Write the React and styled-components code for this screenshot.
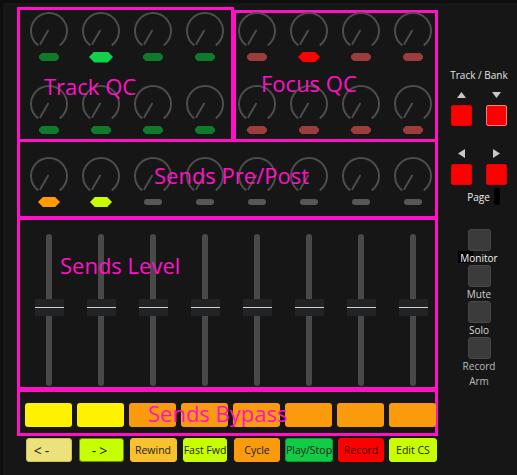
import React from 'react'
import styled, { createGlobalStyle } from 'styled-components'

const PINK = '#ff12c6'

const GlobalStyle = createGlobalStyle`
  html, body {
    margin: 0;
    padding: 0;
    background: #161616;
  }
  * { box-sizing: border-box; }
  body {
    font-family: 'Open Sans', 'Noto Sans', sans-serif;
  }
`

const Screen = styled.div`
  width: 517px;
  height: 475px;
  display: flex;
  background: #161616;
  box-shadow: inset 3px 3px 0 #0e0e0e;
  overflow: hidden;
`

const MainColumn = styled.div`
  flex: none;
  width: 421px;
  margin-left: 17px;
  padding-top: 7px;
  display: flex;
  flex-direction: column;
`

const TopRow = styled.div`
  display: flex;
  align-items: flex-end;
  height: 135px;
`

// pink annotation frame round a group of controls
const Zone = styled.section`
  position: relative;
  flex: none;
  width: ${(p) => p.$w}px;
  height: ${(p) => p.$h}px;
  margin-top: ${(p) => p.$mt || 0}px;
  margin-left: ${(p) => p.$ml || 0}px;
  border: 3px solid ${PINK};
`

const ZoneLabel = styled.span`
  position: absolute;
  top: ${(p) => p.$top}px;
  left: ${(p) => p.$left}px;
  z-index: 2;
  font-size: 22px;
  line-height: 22px;
  color: ${PINK};
  white-space: nowrap;
  pointer-events: none;
`

const KnobGrid = styled.div`
  display: grid;
  grid-template-columns: repeat(${(p) => p.$cols}, 42px);
  column-gap: 10px;
  row-gap: 21px;
  padding: ${(p) => p.$pt || 0}px 0 0 ${(p) => p.$pl || 0}px;
  margin-top: ${(p) => p.$mt || 0}px;
`

const KnobCell = styled.div`
  display: flex;
  flex-direction: column;
  align-items: center;
`

const KnobDial = styled.svg`
  display: block;
  width: 40px;
  height: 40px;
  fill: none;
  stroke: #4d4d4d;
  stroke-width: 2;
`

const LightSlot = styled.div`
  width: 100%;
  height: 12px;
  display: flex;
  align-items: center;
  justify-content: center;
`

const SHAPES = {
  hex: 'polygon(22% 0, 78% 0, 100% 50%, 78% 100%, 22% 100%, 0 50%)',
  oct: 'polygon(14% 0, 86% 0, 100% 35%, 100% 65%, 86% 100%, 14% 100%, 0 65%, 0 35%)',
  pill: 'none'
}

const LIGHTS = {
  green: { w: 20, h: 8, bg: '#107a2c', shape: 'oct' },
  greenOn: { w: 24, h: 11, bg: '#12d24a', shape: 'hex' },
  red: { w: 20, h: 8, bg: '#9b3d3d', shape: 'oct' },
  redOn: { w: 22, h: 10, bg: '#ff0000', shape: 'hex' },
  orange: { w: 22, h: 10, bg: '#ff9a00', shape: 'hex' },
  lime: { w: 22, h: 10, bg: '#c8ff00', shape: 'hex' },
  grey: { w: 18, h: 6, bg: '#575757', shape: 'pill' }
}

const Light = styled.span`
  display: block;
  width: ${(p) => LIGHTS[p.$kind].w}px;
  height: ${(p) => LIGHTS[p.$kind].h}px;
  background: ${(p) => LIGHTS[p.$kind].bg};
  clip-path: ${(p) => SHAPES[LIGHTS[p.$kind].shape]};
  border-radius: ${(p) => (LIGHTS[p.$kind].shape === 'pill' ? '3px' : '0')};
`

const FaderGrid = styled.div`
  display: grid;
  grid-template-columns: repeat(8, 42px);
  column-gap: 10px;
  padding: 14px 0 0 8px;
`

const FaderCell = styled.div`
  position: relative;
  height: 152px;
  display: flex;
  justify-content: center;
`

const FaderTrack = styled.div`
  width: 6px;
  height: 100%;
  border-radius: 3px;
  background: #494949;
`

const FaderCap = styled.div`
  position: absolute;
  top: 65px;
  left: 50%;
  width: 29px;
  height: 17px;
  margin-left: -14.5px;
  background: #222325;
  &::after {
    content: '';
    position: absolute;
    left: 0;
    right: 0;
    top: 8px;
    height: 1px;
    background: #cfcfcf;
  }
`

const BypassRow = styled.div`
  display: flex;
  gap: 5px;
  padding: 11px 0 0 5px;
`

const PadButton = styled.div`
  flex: none;
  width: 47px;
  height: 24px;
  border-radius: 3px;
  background: ${(p) => p.$color};
`

const TransportRow = styled.div`
  display: grid;
  grid-template-columns: repeat(8, 52px);
  justify-items: center;
  height: 24px;
  margin-top: 2px;
  padding-left: 6px;
`

const TransportButton = styled.div`
  width: ${(p) => p.$w}px;
  height: 24px;
  display: flex;
  align-items: center;
  justify-content: center;
  padding-right: ${(p) => p.$pr || 0}px;
  border: 1px solid ${(p) => p.$edge || p.$bg};
  border-radius: 3px;
  background: ${(p) => p.$bg};
  color: ${(p) => p.$color || '#1c1c1c'};
  font-size: ${(p) => (p.$big ? '14px' : '10.5px')};
  letter-spacing: ${(p) => (p.$big ? '3px' : '0')};
  white-space: nowrap;
`

const SidePanel = styled.aside`
  flex: none;
  width: 79px;
  padding: 69px 0 0 3px;
  display: flex;
  flex-direction: column;
  align-items: center;
  font-size: 10px;
  line-height: 12px;
  color: #e4e4e4;
`

const SideTitle = styled.div`
  white-space: nowrap;
`

const PairRow = styled.div`
  display: flex;
  gap: 14px;
  margin-top: ${(p) => p.$mt}px;
`

const ArrowCell = styled.div`
  width: 21px;
  height: ${(p) => p.$h}px;
  display: flex;
  align-items: center;
  justify-content: center;
`

const Arrow = styled.svg`
  display: block;
  fill: #c8c8c8;
`

const RedPad = styled.div`
  width: 21px;
  height: 21px;
  border: 1px solid ${(p) => p.$edge || '#e60000'};
  border-radius: 2px;
  background: #ff0000;
`

const PageRow = styled.div`
  display: flex;
  align-items: center;
  gap: 4px;
  height: 17px;
  margin: 3px 0 0 9px;
  color: #eeeeee;
`

const PageSlot = styled.span`
  width: 6px;
  height: 17px;
  border-radius: 2px;
  background: #000;
`

const ToggleGroup = styled.div`
  display: flex;
  flex-direction: column;
  align-items: center;
  margin-top: ${(p) => p.$mt || 0}px;
`

const ToggleButton = styled.div`
  width: 23px;
  height: 22px;
  border: 1px solid #474747;
  border-radius: 3px;
  background: #3b3b3b;
`

const ToggleLabel = styled.div`
  position: relative;
  z-index: 0;
  line-height: ${(p) => p.$lh || 14}px;
  color: ${(p) => p.$color};
  text-align: center;
  white-space: nowrap;
  ${(p) => p.$shade && `
    &::before {
      content: '';
      position: absolute;
      z-index: -1;
      left: -2px;
      top: 0;
      width: 15px;
      height: 12px;
      background: #000;
    }
  `}
`

const trackLights = [
  ['green', 'greenOn', 'green', 'green'],
  ['green', 'green', 'green', 'green']
]
const focusLights = [
  ['red', 'redOn', 'red', 'red'],
  ['red', 'red', 'red', 'red']
]
const sendLights = ['orange', 'lime', 'grey', 'grey', 'grey', 'grey', 'grey', 'grey']
const bypassColors = ['#fff200', '#fff200', '#f99b0c', '#f99b0c', '#f99b0c', '#f99b0c', '#f99b0c', '#f99b0c']

const transport = [
  { label: '<-', w: 46, bg: '#ece27b', edge: '#cdc25c', big: true, pr: 12 },
  { label: '->', w: 45, bg: '#c6ff00', edge: '#6e8c00', big: true },
  { label: 'Rewind', w: 47, bg: '#f8c12d' },
  { label: 'Fast Fwd', w: 44, bg: '#c8ff00' },
  { label: 'Cycle', w: 46, bg: '#f99b0c' },
  { label: 'Play/Stop', w: 48, bg: '#12cc45', edge: '#0b9a33' },
  { label: 'Record', w: 46, bg: '#ff0000', color: '#4a0000' },
  { label: 'Edit CS', w: 48, bg: '#c8ff00' }
]

const toggles = [
  { label: 'Monitor', color: '#f4f4f4', shade: true },
  { label: 'Mute', color: '#cfcfcf' },
  { label: 'Solo', color: '#dadada' },
  { label: 'Record\nArm', color: '#bababa', lh: 15 }
]

const Knob = ({ light }) => (
  <KnobCell>
    <KnobDial viewBox='0 0 40 40'>
      <path d='M9.17 34.38A18 18 0 1 1 30.83 34.38' />
      <line x1='19' y1='19.7' x2='11.3' y2='33' strokeLinecap='round' />
    </KnobDial>
    <LightSlot><Light $kind={light} /></LightSlot>
  </KnobCell>
)

const App = () => (
  <Screen>
    <GlobalStyle />
    <MainColumn>
      <TopRow>
        <Zone $w={217} $h={135}>
          <KnobGrid $cols={4} $pt={1} $pl={8}>
            {trackLights.flat().map((l, i) => <Knob key={i} light={l} />)}
          </KnobGrid>
          <ZoneLabel $top={64.5} $left={24}>Track QC</ZoneLabel>
        </Zone>
        <Zone $w={205} $h={132} $ml={-1}>
          <KnobGrid $cols={4} $mt={-2}>
            {focusLights.flat().map((l, i) => <Knob key={i} light={l} />)}
          </KnobGrid>
          <ZoneLabel $top={58.5} $left={25}>Focus QC</ZoneLabel>
        </Zone>
      </TopRow>

      <Zone $w={421} $h={80} $mt={-3}>
        <KnobGrid $cols={8} $pt={14} $pl={8}>
          {sendLights.map((l, i) => <Knob key={i} light={l} />)}
        </KnobGrid>
        <ZoneLabel $top={22} $left={134}>Sends Pre/Post</ZoneLabel>
      </Zone>

      <Zone $w={421} $h={173} $mt={-2}>
        <FaderGrid>
          {sendLights.map((_, i) => (
            <FaderCell key={i}>
              <FaderTrack />
              <FaderCap />
            </FaderCell>
          ))}
        </FaderGrid>
        <ZoneLabel $top={34} $left={40}>Sends Level</ZoneLabel>
      </Zone>

      <Zone $w={421} $h={47} $mt={-1}>
        <BypassRow>
          {bypassColors.map((c, i) => <PadButton key={i} $color={c} />)}
        </BypassRow>
        <ZoneLabel $top={10} $left={128}>Sends Bypass</ZoneLabel>
      </Zone>

      <TransportRow>
        {transport.map((b) => (
          <TransportButton key={b.label} $w={b.w} $bg={b.bg} $edge={b.edge} $big={b.big} $pr={b.pr} $color={b.color}>
            {b.label}
          </TransportButton>
        ))}
      </TransportRow>
    </MainColumn>

    <SidePanel>
      <SideTitle>Track / Bank</SideTitle>
      <PairRow $mt={11}>
        <ArrowCell $h={6}>
          <Arrow width='9' height='6' viewBox='0 0 9 6'><polygon points='0,6 4.5,0 9,6' /></Arrow>
        </ArrowCell>
        <ArrowCell $h={6}>
          <Arrow width='9' height='6' viewBox='0 0 9 6'><polygon points='0,0 9,0 4.5,6' /></Arrow>
        </ArrowCell>
      </PairRow>
      <PairRow $mt={7}>
        <RedPad />
        <RedPad $edge='#ff7b7b' />
      </PairRow>
      <PairRow $mt={23}>
        <ArrowCell $h={9}>
          <Arrow width='7' height='9' viewBox='0 0 7 9'><polygon points='7,0 7,9 0,4.5' /></Arrow>
        </ArrowCell>
        <ArrowCell $h={9}>
          <Arrow width='7' height='9' viewBox='0 0 7 9'><polygon points='0,0 7,4.5 0,9' /></Arrow>
        </ArrowCell>
      </PairRow>
      <PairRow $mt={6}>
        <RedPad />
        <RedPad />
      </PairRow>
      <PageRow>
        <span>Page</span>
        <PageSlot />
      </PageRow>
      {toggles.map((t, i) => (
        <ToggleGroup key={t.label} $mt={i === 0 ? 24 : 0}>
          <ToggleButton />
          <ToggleLabel $color={t.color} $lh={t.lh} $shade={t.shade}>
            {t.label.split('\n').map((line) => <div key={line}>{line}</div>)}
          </ToggleLabel>
        </ToggleGroup>
      ))}
    </SidePanel>
  </Screen>
)

export default App
